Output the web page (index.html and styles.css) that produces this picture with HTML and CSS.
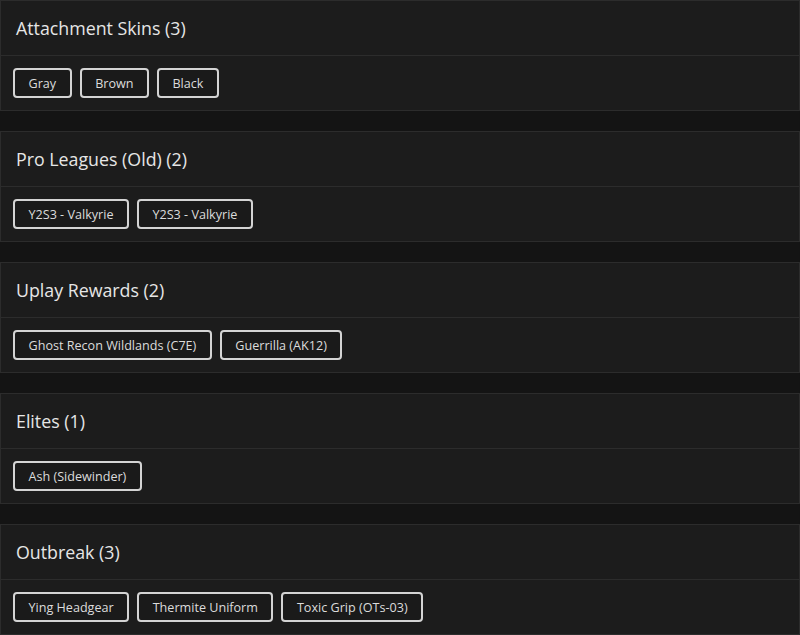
FILE: index.html
```html
<!DOCTYPE html>
<html>
<head>
<meta charset="utf-8">
<link rel="stylesheet" href="styles.css">
</head>
<body>
<div class="list">
  <section class="card">
    <h2 class="card-title">Attachment Skins (3)</h2>
    <div class="card-body">
      <span class="tag">Gray</span><span class="tag">Brown</span><span class="tag">Black</span>
    </div>
  </section>
  <section class="card">
    <h2 class="card-title">Pro Leagues (Old) (2)</h2>
    <div class="card-body">
      <span class="tag">Y2S3 - Valkyrie</span><span class="tag">Y2S3 - Valkyrie</span>
    </div>
  </section>
  <section class="card">
    <h2 class="card-title">Uplay Rewards (2)</h2>
    <div class="card-body">
      <span class="tag">Ghost Recon Wildlands (C7E)</span><span class="tag">Guerrilla (AK12)</span>
    </div>
  </section>
  <section class="card">
    <h2 class="card-title">Elites (1)</h2>
    <div class="card-body">
      <span class="tag">Ash (Sidewinder)</span>
    </div>
  </section>
  <section class="card">
    <h2 class="card-title">Outbreak (3)</h2>
    <div class="card-body">
      <span class="tag">Ying Headgear</span><span class="tag">Thermite Uniform</span><span class="tag">Toxic Grip (OTs-03)</span>
    </div>
  </section>
</div>
</body>
</html>
```

FILE: styles.css
```css
html, body {
  margin: 0;
  padding: 0;
  background: #141414;
}
body {
  font-family: "Open Sans", "Liberation Sans", sans-serif;
  color: #e4e4e4;
}
.list {
  display: flex;
  flex-direction: column;
  gap: 20px;
}
.card {
  background: #1c1c1c;
  border: 1px solid #2c2c2c;
}
.card-title {
  margin: 0;
  height: 55px;
  box-sizing: border-box;
  padding: 0 15px 1px;
  display: flex;
  align-items: center;
  font-size: 17.8px;
  font-weight: 500;
  color: #e6e6e6;
  border-bottom: 1px solid #2c2c2c;
}
.card-body {
  height: 54px;
  box-sizing: border-box;
  padding: 12px 12px;
  display: flex;
  gap: 8px;
}
.tag {
  box-sizing: border-box;
  height: 30px;
  display: inline-flex;
  align-items: center;
  padding: 0 13.5px;
  border: 2px solid #d4d4d4;
  border-radius: 4px;
  font-size: 12.6px;
  color: #dcdcdc;
  background: #1a1a1a;
}
```
